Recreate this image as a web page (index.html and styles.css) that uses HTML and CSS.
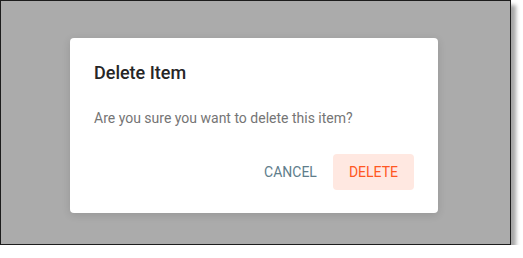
FILE: index.html
```html
<!DOCTYPE html>
<html>
<head>
<meta charset="utf-8">
<link rel="stylesheet" href="styles.css">
</head>
<body>
<div class="frame">
  <div class="dialog">
    <h2 class="title">Delete Item</h2>
    <p class="message">Are you sure you want to delete this item?</p>
    <div class="actions">
      <button class="btn btn-cancel">Cancel</button>
      <button class="btn btn-delete">Delete</button>
    </div>
  </div>
</div>
</body>
</html>
```
FILE: styles.css
```css
html, body {
  margin: 0;
  padding: 0;
  background: #ffffff;
}
body {
  font-family: Roboto, "Liberation Sans", sans-serif;
}
.frame {
  box-sizing: border-box;
  width: 511px;
  height: 245px;
  border: 1px solid #1c1c1c;
  background: #ababab;
  box-shadow: 5px 5px 4px rgba(0, 0, 0, 0.35);
  padding: 37px 0 0 69px;
  display: flex;
  align-items: flex-start;
}
.dialog {
  box-sizing: border-box;
  width: 368px;
  height: 175px;
  background: #ffffff;
  border-radius: 4px;
  padding: 23px 24px 23px 24px;
  display: flex;
  flex-direction: column;
  box-shadow: 0 2px 8px rgba(0, 0, 0, 0.12);
}
.title {
  margin: 0;
  font-size: 18px;
  line-height: 24px;
  font-weight: 500;
  color: #262626;
}
.message {
  margin: 23px 0 0 0;
  font-size: 14px;
  line-height: 20px;
  color: #757575;
}
.actions {
  margin-top: 26px;
  display: flex;
  justify-content: flex-end;
}
.btn {
  font-family: Roboto, "Liberation Sans", sans-serif;
  font-size: 14px;
  text-transform: uppercase;
  height: 36px;
  padding: 0 16px;
  border: none;
  border-radius: 4px;
  background: transparent;
  cursor: pointer;
}
.btn-cancel {
  color: #607d8b;
}
.btn-delete {
  color: #ff5722;
  background: #ffe8e1;
}
```
